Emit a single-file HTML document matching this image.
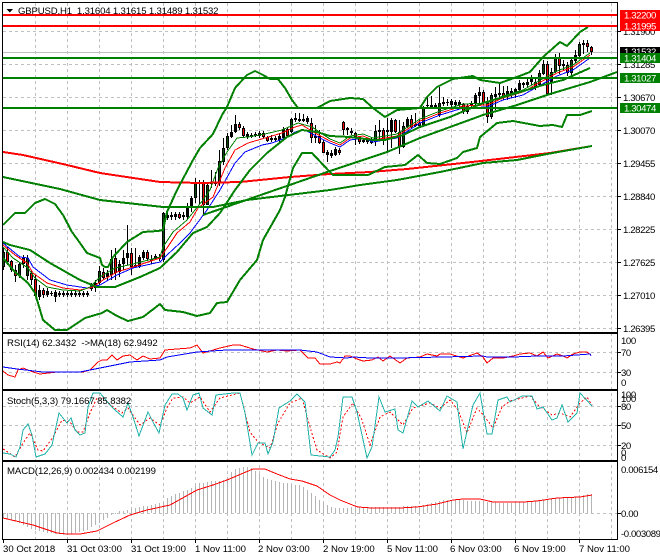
<!DOCTYPE html>
<html><head><meta charset="utf-8"><style>
html,body{margin:0;padding:0;background:#fff;width:660px;height:560px;overflow:hidden}
svg{display:block}
polyline{shape-rendering:crispEdges}
text{font-family:"Liberation Sans",sans-serif;font-size:9.6px;fill:#000;white-space:pre}
.a{letter-spacing:-.4px}
.w{fill:#fff}
</style></head><body>
<svg width="660" height="560" viewBox="0 0 660 560" xmlns="http://www.w3.org/2000/svg">
<rect width="660" height="560" fill="#fff"/>
<!-- grid -->
<g stroke="#c0c0c0" stroke-width="1" stroke-dasharray="3 3" fill="none" shape-rendering="crispEdges">
<path d="M35.5 3V539M67.5 3V539M99.5 3V539M131.5 3V539M163.5 3V539M195.5 3V539M227.5 3V539M259.5 3V539M291.5 3V539M323.5 3V539M355.5 3V539M387.5 3V539M419.5 3V539M451.5 3V539M483.5 3V539M515.5 3V539M547.5 3V539M579.5 3V539M611.5 3V539"/>
<path d="M3 31.5H617M3 64.5H617M3 97.5H617M3 130.5H617M3 163.5H617M3 196.5H617M3 229.5H617M3 262.5H617M3 295.5H617M3 328.5H617M3 352.5H617M3 372.5H617M3 406.5H617M3 425.5H617M3 445.5H617M3 513.5H617"/>
</g>
<path d="M3 52.5H617" stroke="#c0c0c0" shape-rendering="crispEdges"/>
<!-- wicks -->
<path shape-rendering="crispEdges" stroke="#000" fill="none" d="M3.5 248V270M7.5 247V265M11.5 260V272M15.5 265V282M19.5 262V278M23.5 255V268M27.5 255V280M31.5 270V285M35.5 275V297M39.5 285V300M43.5 288V298M47.5 288V297M51.5 291V296M55.5 290V302M59.5 291V297M63.5 291V297M67.5 291V297M71.5 290V297M75.5 291V297M79.5 291V297M83.5 291V297M87.5 291V297M91.5 283V291M95.5 280V292M99.5 266V285M103.5 268V280M107.5 270V280M111.5 250V280M115.5 248V280M119.5 260V277M123.5 250V270M127.5 225V265M131.5 248V275M135.5 248V268M139.5 255V268M143.5 250V260M147.5 250V261M151.5 255V264M155.5 254V260M159.5 254V261M163.5 212V262M167.5 213V220M171.5 212V220M175.5 212V220M179.5 212V219M183.5 212V220M187.5 203V220M191.5 196V212M195.5 178V203M199.5 180V205M203.5 180V215M207.5 182V205M211.5 170V188M215.5 172V186M219.5 150V186M223.5 138V165M227.5 133V150M231.5 125V138M235.5 115V133M239.5 122V130M243.5 126V137M247.5 132V139M251.5 133V138M255.5 132V137M259.5 131V138M263.5 131V138M267.5 136V142M271.5 135V142M275.5 136V141M279.5 133V142M283.5 127V139M287.5 127V137M291.5 118V133M295.5 113V122M299.5 113V122M303.5 114V122M307.5 116V124M311.5 118V143M315.5 125V143M319.5 130V144M323.5 140V153M327.5 150V162M331.5 150V158M335.5 147V156M339.5 148V155M343.5 121V135M347.5 127V135M351.5 128V135M355.5 132V145M359.5 137V144M363.5 139V143M367.5 139V144M371.5 138V144M375.5 125V146M379.5 120V140M383.5 128V145M387.5 118V152M391.5 118V148M395.5 119V133M399.5 120V154M403.5 122V148M407.5 117V128M411.5 115V128M415.5 113V127M419.5 120V128M423.5 106V126M427.5 97V108M431.5 96V108M435.5 103V109M439.5 87V117M443.5 97V106M447.5 99V106M451.5 99V107M455.5 100V107M459.5 100V107M463.5 103V114M467.5 104V114M471.5 101V108M475.5 93V105M479.5 87V105M483.5 90V105M487.5 97V123M491.5 93V119M495.5 87V110M499.5 82V97M503.5 86V100M507.5 86V100M511.5 88V98M515.5 88V98M519.5 80V92M523.5 82V88M527.5 78V87M531.5 75V85M535.5 78V90M539.5 70V87M543.5 60V75M547.5 61V96M551.5 68V95M555.5 54V73M559.5 53V74M563.5 60V70M567.5 62V76M571.5 58V75M575.5 50V63M579.5 42V57M583.5 40V54M587.5 40V52M591.5 46V55"/>
<!-- bull bodies -->
<g shape-rendering="crispEdges" fill="none">
<path stroke="#000" stroke-width="3" d="M3.5 252V267M19.5 264V276M27.5 258V276M39.5 290V297M47.5 291V295M51.5 293V294M55.5 292V297M59.5 293V295M63.5 293V295M67.5 293V295M71.5 293V295M75.5 293V295M79.5 293V295M83.5 293V295M87.5 293V295M91.5 284V289M95.5 283V288M99.5 271V283M107.5 273V277M111.5 259V275M119.5 264V272M123.5 258V264M127.5 253V258M135.5 265V267M139.5 257V267M143.5 252V258M151.5 259V261M155.5 256V259M159.5 257V259M163.5 213V260M167.5 215V218M171.5 215V217M175.5 214V217M183.5 215V217M187.5 207V217M191.5 198V207M195.5 183V198M199.5 182V184M207.5 185V205M211.5 182V184M215.5 182V184M219.5 161V183M223.5 148V162M227.5 136V148M231.5 132V137M235.5 124V132M247.5 134V137M251.5 135V137M255.5 134V136M259.5 133V136M271.5 138V140M275.5 138V140M279.5 136V140M283.5 129V138M291.5 119V132M295.5 118V120M299.5 119V121M303.5 119V121M307.5 118V122M315.5 136V138M327.5 152V155M331.5 153V156M335.5 149V155M347.5 128V130M363.5 140V142M367.5 140V142M371.5 139V143M375.5 131V142M379.5 130V132M387.5 130V132M391.5 120V132M403.5 126V147M407.5 119V127M415.5 124V126M423.5 108V125M427.5 105V106M431.5 105V107M435.5 105V107M439.5 103V115M443.5 102V104M447.5 102V103M451.5 101V105M455.5 102V105M459.5 102V105M467.5 106V112M471.5 103V106M475.5 95V103M479.5 92V96M491.5 95V117M495.5 94V97M499.5 93V95M507.5 91V97M511.5 91V94M515.5 89V94M519.5 83V90M523.5 83V85M527.5 82V85M531.5 77V82M539.5 73V85M543.5 64V74M551.5 72V83M555.5 58V72M563.5 64V66M571.5 60V73M575.5 55V61M579.5 44V56M583.5 43V45"/>
<path stroke="#0a4a0a" stroke-width="1" d="M3.5 253V266M19.5 265V275M27.5 259V275M99.5 272V282M111.5 260V274M163.5 214V259M195.5 184V197M207.5 186V204M219.5 162V182M223.5 149V161M227.5 137V147M291.5 120V131M375.5 132V141M403.5 127V146M423.5 109V124M439.5 104V114M491.5 96V116M539.5 74V84M543.5 65V73M555.5 59V71M571.5 61V72M579.5 45V55"/>
<!-- bear bodies -->
<path stroke="#000" stroke-width="3" d="M7.5 252V262M11.5 261V270M15.5 270V276M23.5 258V264M31.5 273V280M35.5 279V296M43.5 290V295M103.5 272V278M115.5 258V273M131.5 253V267M147.5 252V259M179.5 214V218M203.5 183V205M239.5 124V128M243.5 128V136M263.5 133V137M267.5 137V141M287.5 129V136M311.5 123V138M319.5 136V143M323.5 142V153M339.5 150V153M343.5 122V130M351.5 131V133M355.5 133V137M359.5 137V142M383.5 130V141M395.5 120V132M399.5 132V147M411.5 119V127M419.5 123V126M463.5 104V112M483.5 92V103M487.5 103V117M503.5 93V98M535.5 82V87M547.5 64V94M559.5 58V66M567.5 65V73M587.5 43V47M591.5 47V52"/>
<path stroke="#f00" stroke-width="1" d="M7.5 253V261M11.5 262V269M15.5 271V275M23.5 259V263M31.5 274V279M35.5 280V295M43.5 291V294M103.5 273V277M115.5 259V272M131.5 254V266M147.5 253V258M179.5 215V217M203.5 184V204M239.5 125V127M243.5 129V135M263.5 134V136M267.5 138V140M287.5 130V135M311.5 124V137M319.5 137V142M323.5 143V152M339.5 151V152M343.5 123V129M351.5 132V132M355.5 134V136M359.5 138V141M383.5 131V140M395.5 121V131M399.5 133V146M411.5 120V126M419.5 124V125M463.5 105V111M483.5 93V102M487.5 104V116M503.5 94V97M535.5 83V86M547.5 65V93M559.5 59V65M567.5 66V72M587.5 44V46M591.5 48V51"/>
</g>
<!-- fast MAs -->
<g fill="none" stroke-width="1">
<polyline stroke="#00f" points="3,243 20,257 28,258 33,267 50,280 67,285 87,288 100,285 117,275 133,268 160,262 167,255 180,243 190,233 207,210 220,190 235,163 245,152 262,145 272,143 285,138 295,132 305,130 318,137 330,143 340,147 350,140 363,138 373,142 397,138 420,123 440,115 463,108 487,107 503,100 523,95 537,87 557,76 573,70 590,58"/>
<polyline stroke="#f00" points="3,245 15,255 27,263 33,273 47,283 63,288 80,290 93,287 103,280 117,272 133,267 160,258 167,248 177,233 190,222 198,208 213,197 225,168 235,150 248,143 265,138 282,133 295,127 302,125 315,133 330,141 340,145 350,138 363,136 373,140 397,136 420,121 440,113 463,106 487,105 503,98 523,92 537,84 557,73 573,67 590,55"/>
<polyline stroke="#008000" points="3,247 13,258 28,268 35,278 47,287 63,290 80,291 90,287 100,277 115,268 133,264 160,257 163,247 173,232 187,220 203,200 210,190 218,168 227,152 237,138 248,137 265,134 282,130 298,123 312,127 330,139 340,143 350,136 363,134 373,138 397,134 420,119 440,111 463,104 487,103 503,96 523,90 537,82 557,71 573,65 590,53"/>
</g>
<!-- thick curves -->
<g fill="none" stroke-width="2" stroke-linejoin="round">
<polyline stroke="#f00" points="3,152 23,155 67,165 100,173 160,182 200,183 240,182 290,177 330,174 370,172 407,169 463,163 507,158 550,153 592,146"/>
<polyline stroke="#008000" points="3,177 60,189 100,200 163,207 213,207 247,200 330,190 360,185 397,180 440,172 483,163 517,160 547,154 592,146"/>
<polyline stroke="#008000" points="203,215 330,171 387,152 420,138 483,115 517,105 550,94 590,82 617,72"/>
<polyline stroke="#008000" points="3,225 5,223 15,213 25,213 35,203 45,199 55,204 63,215 72,232 80,243 87,253 100,258 102,265 105,267 108,267 113,257 127,242 143,232 158,231 163,230 167,212 177,190 193,160 200,148 213,134 222,115 227,107 235,88 247,75 255,71 263,75 270,79 278,79 285,88 292,100 298,108 317,108 330,101 350,98 363,99 373,108 385,117 397,110 420,108 427,97 437,87 453,79 473,76 480,80 500,83 517,77 530,72 543,57 560,42 567,46 580,32 588,27"/>
<polyline stroke="#008000" points="3,242 10,245 30,250 50,263 80,280 97,287 115,287 140,277 160,268 177,252 193,233 207,227 220,213 235,190 250,170 267,153 287,137 302,130 317,132 330,136 350,137 373,140 385,140 403,135 420,127 450,117 483,103 517,93 543,85 563,80 590,68"/>
<polyline stroke="#008000" points="3,258 15,272 28,283 35,293 43,320 55,330 67,330 85,318 102,313 107,310 117,316 128,321 143,317 160,304 165,310 183,312 197,316 210,313 217,303 227,302 240,280 257,260 263,240 280,210 285,197 293,168 302,153 312,153 328,170 333,175 355,175 368,175 385,167 405,165 418,155 427,163 440,164 457,158 463,152 477,148 480,137 497,123 513,121 540,126 553,125 562,127 567,115 580,115 592,111"/>
</g>
<!-- horizontal levels -->
<g shape-rendering="crispEdges" stroke-width="2">
<path stroke="#f00" d="M3 15H617M3 26H617"/>
<path stroke="#008000" d="M3 58H617M3 78H617M3 108H617"/>
</g>
<!-- RSI -->
<polyline fill="none" stroke="#f00" points="3,371 8,375 15,377 18,370 23,368 33,372 40,374 57,372 83,372 90,370 98,362 102,360 107,360 112,355 117,360 123,356 130,355 137,360 143,356 150,359 160,358 165,350 177,349 190,348 197,345 203,353 220,348 233,345 240,345 253,349 267,352 277,350 287,351 300,350 308,358 315,358 320,364 330,364 337,362 340,363 345,356 350,356 357,359 363,361 372,360 378,357 383,361 390,356 400,363 407,358 420,357 427,354 437,356 440,354 450,354 460,357 463,358 477,353 483,357 487,363 493,358 503,358 513,356 520,354 530,353 537,356 543,352 548,358 557,354 563,356 567,358 573,354 580,352 587,352 591,355"/>
<polyline fill="none" stroke="#00f" stroke-width="1" points="3,367 17,369 43,372 80,372 100,368 130,362 160,360 167,357 197,352 227,350 300,350 317,352 330,357 347,358 353,357 370,358 397,358 443,357 483,356 487,357 513,357 537,356 563,356 590,354 591,356"/>
<!-- Stoch -->
<polyline fill="none" stroke="#f00" stroke-dasharray="2 2" points="3,449 15,457 23,443 30,433 38,450 43,451 53,437 62,420 70,422 77,432 83,432 90,413 97,398 103,398 113,407 122,413 128,408 140,425 150,418 160,425 167,408 173,398 183,397 190,403 200,397 210,412 220,398 240,393 250,432 258,442 270,448 278,423 290,403 302,398 310,427 317,450 330,458 337,452 343,417 353,403 362,420 370,445 380,417 390,412 403,425 413,408 430,403 440,408 450,400 458,410 467,433 477,408 485,417 493,428 502,407 510,401 530,396 538,405 552,415 560,413 570,417 580,403 587,397 592,405"/>
<polyline fill="none" stroke="#20b2aa" stroke-width="1" points="3,453 10,454 16,457 20,447 23,430 28,424 32,435 36,457 45,454 52,445 59,413 67,423 71,418 75,430 80,435 85,433 88,407 93,393 100,393 110,405 115,410 123,417 128,403 133,417 139,436 148,412 153,422 159,433 165,405 172,394 178,394 183,398 187,410 193,395 199,393 203,408 212,415 216,395 233,393 240,393 245,413 252,455 258,443 265,443 268,454 273,442 279,408 290,401 297,394 305,402 311,455 330,457 335,450 338,437 343,397 352,397 357,412 367,458 372,447 379,397 385,412 395,409 398,430 403,433 412,401 418,407 428,401 440,411 447,396 457,402 463,449 473,405 480,393 487,434 492,434 498,400 507,397 510,402 522,396 532,396 537,409 543,407 552,420 557,418 562,405 568,422 577,413 580,393 592,406"/>
<!-- MACD hist -->
<path shape-rendering="crispEdges" stroke="#b4b4b4" fill="none" d="M3.5 513V518M7.5 513V519M11.5 513V520M15.5 513V521M19.5 513V523M23.5 513V525M27.5 513V527M31.5 513V529M35.5 513V530M39.5 513V531M43.5 513V532M47.5 513V533M51.5 513V533M55.5 513V534M59.5 513V534M63.5 513V535M67.5 513V535M71.5 513V534M75.5 513V533M79.5 513V532M83.5 513V531M87.5 513V530M91.5 513V527M95.5 513V525M99.5 513V523M103.5 513V520M107.5 513V518M111.5 513V515M115.5 513V514M119.5 513V511M123.5 513V511M127.5 513V510M131.5 513V509M135.5 513V508M139.5 513V507M143.5 513V506M147.5 513V506M151.5 513V505M155.5 513V504M159.5 513V503M163.5 513V502M167.5 513V498M171.5 513V496M175.5 513V494M179.5 513V493M183.5 513V491M187.5 513V490M191.5 513V488M195.5 513V486M199.5 513V483M203.5 513V483M207.5 513V482M211.5 513V481M215.5 513V481M219.5 513V481M223.5 513V480M227.5 513V478M231.5 513V472M235.5 513V469M239.5 513V468M243.5 513V467M247.5 513V467M251.5 513V468M255.5 513V471M259.5 513V474M263.5 513V477M267.5 513V479M271.5 513V480M275.5 513V481M279.5 513V482M283.5 513V483M287.5 513V483M291.5 513V484M295.5 513V485M299.5 513V485M303.5 513V487M307.5 513V490M311.5 513V493M315.5 513V496M319.5 513V500M323.5 513V503M327.5 513V505M331.5 513V507M335.5 513V508M339.5 513V508M343.5 513V508M347.5 513V508M351.5 513V507M355.5 513V507M359.5 513V507M363.5 513V507M367.5 513V507M371.5 513V507M375.5 513V507M379.5 513V507M383.5 513V507M387.5 513V507M391.5 513V507M395.5 513V507M399.5 513V507M403.5 513V506M407.5 513V506M411.5 513V506M415.5 513V506M419.5 513V506M423.5 513V505M427.5 513V504M431.5 513V503M435.5 513V502M439.5 513V501M443.5 513V500M447.5 513V500M451.5 513V500M455.5 513V500M459.5 513V500M463.5 513V500M467.5 513V501M471.5 513V501M475.5 513V501M479.5 513V501M483.5 513V501M487.5 513V502M491.5 513V502M495.5 513V502M499.5 513V503M503.5 513V503M507.5 513V503M511.5 513V503M515.5 513V503M519.5 513V502M523.5 513V502M527.5 513V502M531.5 513V501M535.5 513V501M539.5 513V501M543.5 513V500M547.5 513V499M551.5 513V498M555.5 513V498M559.5 513V498M563.5 513V498M567.5 513V497M571.5 513V497M575.5 513V497M579.5 513V496M583.5 513V495M587.5 513V494M591.5 513V494"/>
<polyline fill="none" stroke="#f00" stroke-width="1" points="3,518 20,522 33,525 57,533 67,534 80,534 97,531 113,523 130,515 147,510 170,505 197,490 213,485 227,480 253,469 265,469 277,474 290,479 302,481 317,486 330,495 340,500 355,506 358,507 372,508 380,508 400,508 417,507 437,504 453,500 463,499 480,499 493,502 510,502 523,502 537,501 557,498 580,497 592,495"/>
<!-- frames -->
<g shape-rendering="crispEdges" fill="#000">
<rect x="2" y="2" width="616" height="1"/>
<rect x="2" y="2" width="1" height="538"/>
<rect x="617" y="2" width="1" height="538"/>
<rect x="2" y="539" width="616" height="1"/>
<rect x="2" y="332" width="616" height="2"/>
<rect x="2" y="389" width="616" height="2"/>
<rect x="2" y="460" width="616" height="2"/>
</g>
<path shape-rendering="crispEdges" stroke="#000" d="M618 31.5h3M618 64.5h3M618 97.5h3M618 130.5h3M618 163.5h3M618 196.5h3M618 229.5h3M618 262.5h3M618 295.5h3M618 328.5h3M618 352.5h3M618 372.5h3M618 406.5h3M618 425.5h3M618 445.5h3M618 513.5h3M3.5 540v3M67.5 540v3M131.5 540v3M195.5 540v3M259.5 540v3M323.5 540v3M387.5 540v3M451.5 540v3M515.5 540v3M579.5 540v3"/>
<!-- header -->
<path d="M6.5 9h6.5l-3.2 3.5z" fill="#000"/>
<text x="18" y="14" letter-spacing="-.17">GBPUSD,H1  1.31604 1.31615 1.31489 1.31532</text>
<text x="7" y="346" letter-spacing="-.08">RSI(14) 62.3432  -&gt;MA(18) 62.9492</text>
<text x="7" y="404" letter-spacing="-.1">Stoch(5,3,3) 79.1667 85.8382</text>
<text x="7" y="474" letter-spacing="-.1">MACD(12,26,9) 0.002434 0.002199</text>
<!-- axis labels -->
<g class="a">
<text class="a" x="623" y="35">1.31900</text>
<text class="a" x="623" y="68">1.31285</text>
<text class="a" x="623" y="101">1.30670</text>
<text class="a" x="623" y="134">1.30070</text>
<text class="a" x="623" y="167">1.29455</text>
<text class="a" x="623" y="200">1.28840</text>
<text class="a" x="623" y="233">1.28225</text>
<text class="a" x="623" y="266">1.27625</text>
<text class="a" x="623" y="299">1.27010</text>
<text class="a" x="623" y="332">1.26395</text>
<text class="a" x="621" y="344">100</text>
<text class="a" x="621" y="356">70</text>
<text class="a" x="621" y="376">30</text>
<text class="a" x="621" y="386">0</text>
<text class="a" x="621" y="398">100</text>
<text class="a" x="621" y="402">100</text>
<text class="a" x="621" y="410">80</text>
<text class="a" x="621" y="429">50</text>
<text class="a" x="621" y="449">20</text>
<text class="a" x="621" y="456">0</text>
<text class="a" x="621" y="461">0</text>
<text class="a" x="621" y="473">0.006154</text>
<text class="a" x="621" y="517">0.00</text>
<text class="a" x="621" y="537">-0.003089</text>
</g>
<!-- price tags -->
<g shape-rendering="crispEdges">
<rect x="620" y="47" width="40" height="10" fill="#000"/>
<rect x="620" y="10" width="40" height="10.5" fill="#f00"/>
<rect x="620" y="20.5" width="40" height="10.5" fill="#f00"/>
<rect x="620" y="73" width="40" height="10" fill="#008000"/>
<rect x="620" y="103" width="40" height="10" fill="#008000"/>
</g>
<text class="a w" x="624" y="55">1.31532</text>
<rect x="620" y="53" width="40" height="10" fill="#008000" shape-rendering="crispEdges"/>
<text class="a w" x="624" y="18.5">1.32200</text>
<text class="a w" x="624" y="29.5">1.31995</text>
<text class="a w" x="624" y="61.5">1.31404</text>
<text class="a w" x="624" y="81.5">1.31027</text>
<text class="a w" x="624" y="111.5">1.30474</text>
<!-- time axis -->
<g>
<text x="3" y="552">30 Oct 2018</text>
<text x="67" y="552">31 Oct 03:00</text>
<text x="131" y="552">31 Oct 19:00</text>
<text x="195" y="552">1 Nov 11:00</text>
<text x="258" y="552">2 Nov 03:00</text>
<text x="323" y="552">2 Nov 19:00</text>
<text x="387" y="552">5 Nov 11:00</text>
<text x="450" y="552">6 Nov 03:00</text>
<text x="514" y="552">6 Nov 19:00</text>
<text x="579" y="552">7 Nov 11:00</text>
</g>
</svg>
</body></html>
